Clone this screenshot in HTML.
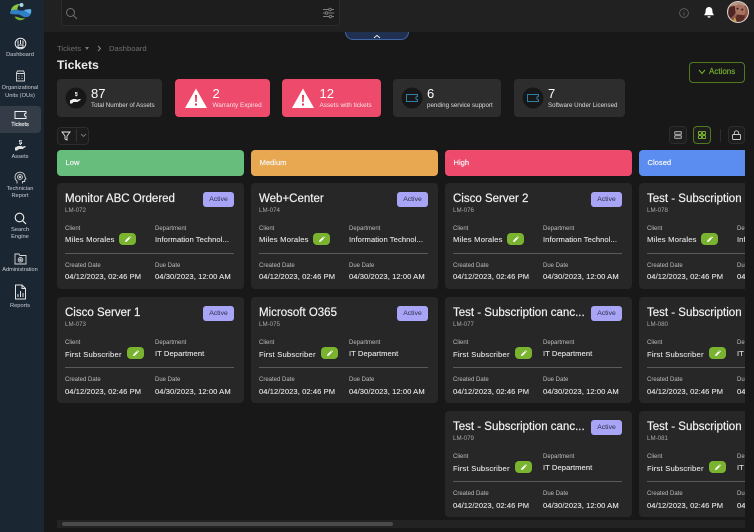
<!DOCTYPE html>
<html><head><meta charset="utf-8"><style>
*{box-sizing:border-box;margin:0;padding:0}
html,body{width:754px;height:532px;overflow:hidden;background:#181818;font-family:"Liberation Sans",sans-serif;color:#fff}
.a{position:absolute}
#side{left:0;top:0;width:44px;height:532px;background:#1b2633}
#top{left:44px;top:0;width:710px;height:32px;background:#212121}
.nl{position:absolute;left:0;width:40px;text-align:center;font-size:5.7px;line-height:7.6px;color:#c9ced4}
.ni{position:absolute}
.stat{position:absolute;top:79px;height:38px;border-radius:4px;background:#2d2d2d}
.stat.r{background:#ee4a6b}
.stat b{position:absolute;left:34px;top:8px;font-weight:400;font-size:13px;line-height:14px}
.stat span{position:absolute;left:34px;top:23px;font-size:6.2px;line-height:7px;white-space:nowrap;color:#ddd}
.stat.r span{color:#fbe3e8;font-size:6.4px}
.stat.r b,.stat.r span{left:37.5px}
.stat svg{position:absolute;left:8px;top:8px}
.hd{position:absolute;top:150px;height:25.5px;border-radius:4px;font-size:7.6px;line-height:25px;padding-left:8.5px;color:#f6f6f6;-webkit-text-stroke:.15px #f6f6f6}
#clip{left:0;top:0;width:745px;height:532px;overflow:hidden}
.c{position:absolute;width:187px;height:106px;background:#272727;border-radius:4px}
.c div{position:absolute;white-space:nowrap}
.t{left:8px;top:9px;font-size:11.5px;line-height:14px;color:#f0f0f0;-webkit-text-stroke:.2px #f0f0f0}
.id{left:8px;top:23.5px;font-size:6.2px;line-height:7px;color:#a8a8a8}
.l{font-size:6px;line-height:7px;color:#bdbdbd;margin-top:1px}
.v{font-size:7.6px;line-height:10px;color:#e6e6e6;letter-spacing:.07px;margin-top:1px;-webkit-text-stroke:.1px #e6e6e6}
.c .v:nth-child(5){letter-spacing:.22px}
.b{left:146px;top:9px;width:31px;height:15px;border-radius:3px;background:#a9a5f6;color:#2b2a4a;font-size:6.8px;line-height:15px;text-align:center}
.p{top:50px;width:17px;height:12px;border-radius:4px;background:#7ab32f}
.p svg{position:absolute;left:4.5px;top:2.5px}
.h{left:8px;top:69.5px;width:169px;height:1px;background:#5a5a5a}
.sq{position:absolute;top:126px;width:18px;height:18px;border-radius:4px;border:1px solid #2d2d2d;background:#1d1d1d}
</style></head><body>
<div class="a" id="top"></div>
<div class="a" style="left:61px;top:0;width:279px;height:25.5px;background:#1d1d1d;border:1px solid #2b2b2b;border-top:0;border-radius:0 0 4px 4px"></div>
<svg class="a" style="left:65px;top:7px" width="13" height="13" viewBox="0 0 13 13" fill="none" stroke="#707070" stroke-width="1"><circle cx="5.5" cy="5.5" r="4"/><path d="M8.5 8.5l3.5 3.5"/></svg>
<svg class="a" style="left:322px;top:7px" width="13" height="12" viewBox="0 0 13 12" fill="none" stroke="#7c7c7c" stroke-width=".9"><path d="M1 2.5h11M1 6h11M1 9.5h11"/><circle cx="8" cy="2.5" r="1.3" fill="#212121"/><circle cx="4.5" cy="6" r="1.3" fill="#212121"/><circle cx="8.5" cy="9.5" r="1.3" fill="#212121"/></svg>
<svg class="a" style="left:678px;top:7px" width="12" height="12" viewBox="0 0 12 12" fill="none" stroke="#6a6a6a" stroke-width=".8"><circle cx="6" cy="6" r="4.4"/><path d="M6 5.4v3M6 3.5v.8"/></svg>
<svg class="a" style="left:703px;top:6px" width="12" height="13" viewBox="0 0 12 13" fill="#fff"><path d="M6 1c-2.4 0-3.4 1.900-3.400 3.900 0 1.900-.5 2.800-1.300 3.600v.8h9.400v-.8c-.8-.8-1.300-1.700-1.300-3.600C9.400 2.900 8.400 1 6 1z"/><path d="M4.500 10.200h3a1.500 1.500 0 0 1-3 0z"/></svg>
<svg class="a" style="left:727px;top:1px" width="22" height="22" viewBox="0 0 23 23"><defs><clipPath id="av"><circle cx="11.5" cy="11.5" r="10.400"/></clipPath></defs><circle cx="11.5" cy="11.5" r="11.500" fill="#d9d4cf"/><g clip-path="url(#av)"><rect width="23" height="23" fill="#8f5648"/><rect y="0" width="23" height="5" fill="#b89584"/><ellipse cx="13" cy="10" rx="6.500" ry="6.500" fill="#a87461"/><path d="M2 7l6-2 1 8-5 5-3-3z" fill="#4d2422"/><path d="M10 14l9 1-2 6-8 1z" fill="#5a2c25"/><path d="M8 17l3 6H6z" fill="#c9a445"/><circle cx="11" cy="8" r="1.100" fill="#3d211c"/><circle cx="16" cy="9" r="1.100" fill="#3d211c"/></g></svg>
<div class="a" style="left:345px;top:32px;width:64px;height:7.5px;background:#1f3050;border:1px solid #3f64a8;border-top:0;border-radius:0 0 12px 12px"></div>
<svg class="a" style="left:373px;top:33.5px" width="8" height="5" viewBox="0 0 8 5" fill="none" stroke="#e8e8e8" stroke-width="1"><path d="M1 4l3-2.600L7 4"/></svg>

<div class="a" id="side">
<svg class="ni" style="left:0;top:0" width="44" height="30" viewBox="0 0 44 30"><path d="M11 11c0-4 4-7 9-7-2 2-3 4-2.500 6z" fill="#8cc63f"/><circle cx="21.500" cy="5" r="2" fill="#a7d5ee"/><path d="M10 13c0-3 4-4 8-3 3 .8 6 1 7.500-.5L31 9c1 3 0 7-3.500 8-4 1-6-2-9-2.500-3-.5-8 .5-8.500-1.500z" fill="#2f7fc4"/><path d="M24 10l6.500-1c.8 1.500.8 3-.5 5-1.500-1-4-2.500-6-4z" fill="#5fb0e6"/><path d="M14.500 16.500c3 0 6 2.500 10.500 1.500-2 3-8 3.500-10.500-1.500z" fill="#7ab32f"/></svg>

<svg class="ni" style="left:14px;top:37px" width="13" height="13" viewBox="0 0 13 13" fill="none" stroke="#e6e6e6" stroke-width="1"><circle cx="6.500" cy="6.500" r="5.300"/><path d="M4 3.500v3.500M6.500 3v4M9 3.500v3.500M4 8h5v2.500H4z"/></svg>
<div class="nl" style="top:52px">Dashboard</div>
<svg class="ni" style="left:15px;top:70px" width="11" height="12" viewBox="0 0 11 12" fill="none" stroke="#d8d8d8" stroke-width=".9"><path d="M1.500 11V3l1-2h6l1 2v8zM1.500 3.500h8M3.500 6h1M6.500 6h1M3.500 8.500h1M6.500 8.500h1"/></svg>
<div class="nl" style="top:85px">Organizational<br>Units (OUs)</div>
<div class="a" style="left:0;top:106px;width:41px;height:27px;border-radius:0 4px 4px 0;background:#343c48"></div>
<svg class="ni" style="left:14px;top:110px" width="13" height="10" viewBox="0 0 13 10" fill="none" stroke="#eee" stroke-width="1"><path d="M1 1.500h11v1.800a1.500 1.500 0 0 0 0 3V8.500H1z"/></svg>
<div class="nl" style="top:121.500px;color:#f0f0f0;-webkit-text-stroke:.15px #f0f0f0">Tickets</div>
<svg class="ni" style="left:14px;top:139px" width="13" height="13" viewBox="0 0 13 13" fill="#e0e0e0"><path d="M5 1h3v.8H5.800v.8H8v2.400H7V6H6v-.9H5v-.8h2.200v-.8H5z"/><path d="M1 8.500l3-1.500h3.500l1 .8L11 7l1 .8-3.500 2.200H5L3 11.500H1z"/></svg>
<div class="nl" style="top:154px">Assets</div>
<svg class="ni" style="left:13px;top:171px" width="14" height="14" viewBox="0 0 14 14" fill="none" stroke="#d8d8d8" stroke-width=".9"><path d="M4 12.500v-2.500C2.500 9 2 7.500 2 6c0-2.800 2.200-4.800 5-4.800s5 2 5 4.800l1 2-1.300.5V10.500H9.500v2"/><circle cx="7" cy="6" r="2.400"/><circle cx="7" cy="6" r=".8"/></svg>
<div class="nl" style="top:185.500px">Technician<br>Report</div>
<svg class="ni" style="left:14px;top:212px" width="13" height="13" viewBox="0 0 13 13" fill="none" stroke="#f0f0f0" stroke-width="1.100"><circle cx="5.500" cy="5.500" r="4.300"/><path d="M8.700 8.700l3.300 3.300"/></svg>
<div class="nl" style="top:226.500px">Search<br>Engine</div>
<svg class="ni" style="left:14px;top:253px" width="13" height="12" viewBox="0 0 13 12" fill="none" stroke="#d8d8d8" stroke-width=".9"><path d="M1 1h4l1 1.500h6V11H1z"/><circle cx="6.500" cy="6.800" r="2.300"/><circle cx="6.500" cy="6.800" r=".8"/></svg>
<div class="nl" style="top:267px;font-size:5.600px">Administration</div>
<svg class="ni" style="left:14px;top:284px" width="13" height="16" viewBox="0 0 13 16" fill="none" stroke="#e4e4e4" stroke-width="1"><path d="M1.500 1h6.500l3.500 3.500V15h-10zM8 1v3.500h3.500"/><path d="M4 13V10M6.500 13V7M9 13V9"/></svg>
<div class="nl" style="top:303px">Reports</div>
</div>

<div class="a" style="left:57px;top:44px;font-size:7.700px;line-height:9px;color:#6e6e6e;white-space:nowrap">Tickets</div>
<div class="a" style="left:85px;top:47px;width:0;height:0;border:2.500px solid transparent;border-top:3.500px solid #7a7a7a"></div>
<svg class="a" style="left:97px;top:45px" width="5" height="7" viewBox="0 0 5 7" fill="none" stroke="#8a8a8a" stroke-width="1"><path d="M1 1l2.500 2.500L1 6"/></svg>
<div class="a" style="left:109px;top:44px;font-size:7.700px;line-height:9px;color:#6e6e6e;white-space:nowrap">Dashboard</div>
<div class="a" style="left:57px;top:58px;font-size:12.200px;line-height:15px;font-weight:700;color:#ececec">Tickets</div>

<div class="stat" style="left:57px;width:105px"><svg width="22" height="22" viewBox="0 0 22 22"><circle cx="11" cy="11" r="10.500" fill="#171717"/><path d="M10 5h2.500v.7H10.700v.7h1.800v2.200h-.8v.8h-.9v-.8H10v-.7h1.800v-.7H10zM5 13.500l3-1.500h3l1 .7 3-.7.9.8-3.500 2.200H8.500L7 16.500H5z" fill="#eee"/></svg><b>87</b><span>Total Number of Assets</span></div>
<div class="stat r" style="left:175px;width:95px"><svg style="left:9.500px;top:9px" width="22" height="21" viewBox="0 0 22 21"><path d="M11 0.500L22 20H0z" fill="#fff"/><path d="M10 7h2l-.3 7h-1.400zM10 15.500h2v2h-2z" fill="#e8354f"/></svg><b>2</b><span>Warranty Expired</span></div>
<div class="stat r" style="left:282px;width:99px"><svg style="left:9.500px;top:9px" width="22" height="21" viewBox="0 0 22 21"><path d="M11 0.500L22 20H0z" fill="#fff"/><path d="M10 7h2l-.3 7h-1.400zM10 15.500h2v2h-2z" fill="#e8354f"/></svg><b>12</b><span>Assets with tickets</span></div>
<div class="stat" style="left:393px;width:108px"><svg width="22" height="22" viewBox="0 0 22 22"><circle cx="11" cy="11" r="10.500" fill="#171717"/><path d="M5.500 7.500h11v1.800a1.700 1.700 0 0 0 0 3.400v1.800h-11z" fill="none" stroke="#2f7ea6" stroke-width="1"/></svg><b>6</b><span>pending service support</span></div>
<div class="stat" style="left:514px;width:111px"><svg width="22" height="22" viewBox="0 0 22 22"><circle cx="11" cy="11" r="10.500" fill="#171717"/><path d="M5.500 7.500h11v1.800a1.700 1.700 0 0 0 0 3.400v1.800h-11z" fill="none" stroke="#2f7ea6" stroke-width="1"/></svg><b>7</b><span>Software Under Licensed</span></div>

<div class="a" style="left:689px;top:62px;width:56px;height:20.500px;border:1px solid #527a1c;border-radius:4px"></div>
<svg class="a" style="left:698px;top:69px" width="8" height="6" viewBox="0 0 8 6" fill="none" stroke="#7ab32f" stroke-width="1"><path d="M1 1l3 3.500L7 1"/></svg>
<div class="a" style="left:709px;top:67px;font-size:8px;line-height:10px;color:#7ab32f;-webkit-text-stroke:.15px #7ab32f">Actions</div>

<div class="a" style="left:57px;top:127px;width:32px;height:17.500px;border:1px solid #2d2d2d;border-radius:4px;background:#1c1c1c"></div>
<div class="a" style="left:76px;top:129px;width:1px;height:13px;background:#333"></div>
<svg class="a" style="left:61px;top:130.500px" width="10" height="10" viewBox="0 0 10 10" fill="none" stroke="#e8e8e8" stroke-width=".9"><path d="M1 1h8L6 5v4L4 8V5z"/></svg>
<svg class="a" style="left:79.500px;top:133px" width="7" height="5" viewBox="0 0 7 5" fill="none" stroke="#7a7a7a" stroke-width=".9"><path d="M1 1l2.500 2.500L6 1"/></svg>

<div class="sq" style="left:669px"></div>
<svg class="a" style="left:674px;top:131px" width="8" height="8" viewBox="0 0 8 8" fill="none" stroke="#9a9a9a" stroke-width="1.200"><rect x=".6" y=".6" width="6.800" height="2.800" rx="1"/><rect x=".6" y="4.600" width="6.800" height="2.800" rx="1"/></svg>
<div class="sq" style="left:693px;border-color:#527a1c"></div>
<svg class="a" style="left:698px;top:131px" width="8" height="8" viewBox="0 0 8 8" fill="none" stroke="#7ab32f" stroke-width="1"><rect x=".5" y=".5" width="3" height="3" rx=".8"/><rect x="4.500" y=".5" width="3" height="3" rx=".8"/><rect x=".5" y="4.500" width="3" height="3" rx=".8"/><rect x="4.500" y="4.500" width="3" height="3" rx=".8"/></svg>
<div class="a" style="left:720px;top:129px;width:1px;height:13px;background:#2c2c2c"></div>
<div class="sq" style="left:728px;width:17px"></div>
<svg class="a" style="left:732px;top:130px" width="9" height="10" viewBox="0 0 9 10" fill="none" stroke="#d0d0d0" stroke-width=".9"><rect x=".5" y="4.500" width="8" height="5" rx="1"/><path d="M2.300 4.500V3a2.200 2.200 0 0 1 4.400 0v1.500"/></svg>

<div class="a" id="clip">
<div class="hd" style="left:57px;width:186.500px;background:#66bd7c">Low</div>
<div class="hd" style="left:251px;width:187px;background:#e8a851">Medium</div>
<div class="hd" style="left:445px;width:187px;background:#ee4a6b">High</div>
<div class="hd" style="left:639px;width:187px;background:#5b8df0">Closed</div>

<!-- col 1 -->
<div class="c" style="left:57px;top:183px"><div class="t">Monitor ABC Ordered</div><div class="id">LM-072</div><div class="b">Active</div><div class="l" style="left:8px;top:41.500px">Client</div><div class="v" style="left:8px;top:51px">Miles Morales</div><div class="p" style="left:62px"><svg width="8" height="7" viewBox="0 0 8 7"><path d="M1 6l.4-1.600 3.300-3.300 1.300 1.300-3.300 3.300zM5.200.7l.6-.5 1.300 1.300-.6.500z" fill="#fff"/></svg></div><div class="l" style="left:98px;top:41.500px">Department</div><div class="v" style="left:98px;top:51px">Information Technol...</div><div class="h"></div><div class="l" style="left:8px;top:78.500px">Created Date</div><div class="v" style="left:8px;top:88px">04/12/2023, 02:46 PM</div><div class="l" style="left:98px;top:78.500px">Due Date</div><div class="v" style="left:98px;top:88px">04/30/2023, 12:00 AM</div></div>

<div class="c" style="left:57px;top:297px"><div class="t">Cisco Server 1</div><div class="id">LM-073</div><div class="b">Active</div><div class="l" style="left:8px;top:41.500px">Client</div><div class="v" style="left:8px;top:52px">First Subscriber</div><div class="p" style="left:70px"><svg width="8" height="7" viewBox="0 0 8 7"><path d="M1 6l.4-1.600 3.300-3.300 1.300 1.300-3.300 3.300zM5.200.7l.6-.5 1.300 1.300-.6.500z" fill="#fff"/></svg></div><div class="l" style="left:98px;top:41.500px">Department</div><div class="v" style="left:98px;top:51px">IT Department</div><div class="h"></div><div class="l" style="left:8px;top:78.500px">Created Date</div><div class="v" style="left:8px;top:89px">04/12/2023, 02:46 PM</div><div class="l" style="left:98px;top:78.500px">Due Date</div><div class="v" style="left:98px;top:89px">04/30/2023, 12:00 AM</div></div>

<!-- col 2 -->
<div class="c" style="left:251px;top:183px"><div class="t">Web+Center</div><div class="id">LM-074</div><div class="b">Active</div><div class="l" style="left:8px;top:41.500px">Client</div><div class="v" style="left:8px;top:51px">Miles Morales</div><div class="p" style="left:62px"><svg width="8" height="7" viewBox="0 0 8 7"><path d="M1 6l.4-1.600 3.300-3.300 1.300 1.300-3.300 3.300zM5.200.7l.6-.5 1.300 1.300-.6.500z" fill="#fff"/></svg></div><div class="l" style="left:98px;top:41.500px">Department</div><div class="v" style="left:98px;top:51px">Information Technol...</div><div class="h"></div><div class="l" style="left:8px;top:78.500px">Created Date</div><div class="v" style="left:8px;top:88px">04/12/2023, 02:46 PM</div><div class="l" style="left:98px;top:78.500px">Due Date</div><div class="v" style="left:98px;top:88px">04/30/2023, 12:00 AM</div></div>

<div class="c" style="left:251px;top:297px"><div class="t">Microsoft O365</div><div class="id">LM-075</div><div class="b">Active</div><div class="l" style="left:8px;top:41.500px">Client</div><div class="v" style="left:8px;top:52px">First Subscriber</div><div class="p" style="left:70px"><svg width="8" height="7" viewBox="0 0 8 7"><path d="M1 6l.4-1.600 3.300-3.300 1.300 1.300-3.300 3.300zM5.200.7l.6-.5 1.300 1.300-.6.500z" fill="#fff"/></svg></div><div class="l" style="left:98px;top:41.500px">Department</div><div class="v" style="left:98px;top:51px">IT Department</div><div class="h"></div><div class="l" style="left:8px;top:78.500px">Created Date</div><div class="v" style="left:8px;top:89px">04/12/2023, 02:46 PM</div><div class="l" style="left:98px;top:78.500px">Due Date</div><div class="v" style="left:98px;top:89px">04/30/2023, 12:00 AM</div></div>

<!-- col 3 -->
<div class="c" style="left:445px;top:183px"><div class="t">Cisco Server 2</div><div class="id">LM-076</div><div class="b">Active</div><div class="l" style="left:8px;top:41.500px">Client</div><div class="v" style="left:8px;top:51px">Miles Morales</div><div class="p" style="left:62px"><svg width="8" height="7" viewBox="0 0 8 7"><path d="M1 6l.4-1.600 3.300-3.300 1.300 1.300-3.300 3.300zM5.200.7l.6-.5 1.300 1.300-.6.500z" fill="#fff"/></svg></div><div class="l" style="left:98px;top:41.500px">Department</div><div class="v" style="left:98px;top:51px">Information Technol...</div><div class="h"></div><div class="l" style="left:8px;top:78.500px">Created Date</div><div class="v" style="left:8px;top:88px">04/12/2023, 02:46 PM</div><div class="l" style="left:98px;top:78.500px">Due Date</div><div class="v" style="left:98px;top:88px">04/30/2023, 12:00 AM</div></div>

<div class="c" style="left:445px;top:297px"><div class="t">Test - Subscription canc...</div><div class="id">LM-077</div><div class="b">Active</div><div class="l" style="left:8px;top:41.500px">Client</div><div class="v" style="left:8px;top:52px">First Subscriber</div><div class="p" style="left:70px"><svg width="8" height="7" viewBox="0 0 8 7"><path d="M1 6l.4-1.600 3.300-3.300 1.300 1.300-3.300 3.300zM5.200.7l.6-.5 1.300 1.300-.6.500z" fill="#fff"/></svg></div><div class="l" style="left:98px;top:41.500px">Department</div><div class="v" style="left:98px;top:51px">IT Department</div><div class="h"></div><div class="l" style="left:8px;top:78.500px">Created Date</div><div class="v" style="left:8px;top:89px">04/12/2023, 02:46 PM</div><div class="l" style="left:98px;top:78.500px">Due Date</div><div class="v" style="left:98px;top:89px">04/30/2023, 12:00 AM</div></div>

<div class="c" style="left:445px;top:411px"><div class="t">Test - Subscription canc...</div><div class="id">LM-079</div><div class="b">Active</div><div class="l" style="left:8px;top:41.500px">Client</div><div class="v" style="left:8px;top:52px">First Subscriber</div><div class="p" style="left:70px"><svg width="8" height="7" viewBox="0 0 8 7"><path d="M1 6l.4-1.600 3.300-3.300 1.300 1.300-3.300 3.300zM5.200.7l.6-.5 1.300 1.300-.6.500z" fill="#fff"/></svg></div><div class="l" style="left:98px;top:41.500px">Department</div><div class="v" style="left:98px;top:51px">IT Department</div><div class="h"></div><div class="l" style="left:8px;top:78.500px">Created Date</div><div class="v" style="left:8px;top:89px">04/12/2023, 02:46 PM</div><div class="l" style="left:98px;top:78.500px">Due Date</div><div class="v" style="left:98px;top:89px">04/30/2023, 12:00 AM</div></div>

<!-- col 4 -->
<div class="c" style="left:639px;top:183px"><div class="t">Test - Subscription canc...</div><div class="id">LM-078</div><div class="b">Active</div><div class="l" style="left:8px;top:41.500px">Client</div><div class="v" style="left:8px;top:51px">Miles Morales</div><div class="p" style="left:62px"><svg width="8" height="7" viewBox="0 0 8 7"><path d="M1 6l.4-1.600 3.300-3.300 1.300 1.300-3.300 3.300zM5.200.7l.6-.5 1.300 1.300-.6.500z" fill="#fff"/></svg></div><div class="l" style="left:98px;top:41.500px">Department</div><div class="v" style="left:98px;top:51px">Information Technol...</div><div class="h"></div><div class="l" style="left:8px;top:78.500px">Created Date</div><div class="v" style="left:8px;top:88px">04/12/2023, 02:46 PM</div><div class="l" style="left:98px;top:78.500px">Due Date</div><div class="v" style="left:98px;top:88px">04/30/2023, 12:00 AM</div></div>

<div class="c" style="left:639px;top:297px"><div class="t">Test - Subscription canc...</div><div class="id">LM-080</div><div class="b">Active</div><div class="l" style="left:8px;top:41.500px">Client</div><div class="v" style="left:8px;top:52px">First Subscriber</div><div class="p" style="left:70px"><svg width="8" height="7" viewBox="0 0 8 7"><path d="M1 6l.4-1.600 3.300-3.300 1.300 1.300-3.300 3.300zM5.200.7l.6-.5 1.300 1.300-.6.500z" fill="#fff"/></svg></div><div class="l" style="left:98px;top:41.500px">Department</div><div class="v" style="left:98px;top:51px">IT Department</div><div class="h"></div><div class="l" style="left:8px;top:78.500px">Created Date</div><div class="v" style="left:8px;top:89px">04/12/2023, 02:46 PM</div><div class="l" style="left:98px;top:78.500px">Due Date</div><div class="v" style="left:98px;top:89px">04/30/2023, 12:00 AM</div></div>

<div class="c" style="left:639px;top:411px"><div class="t">Test - Subscription canc...</div><div class="id">LM-081</div><div class="b">Active</div><div class="l" style="left:8px;top:41.500px">Client</div><div class="v" style="left:8px;top:52px">First Subscriber</div><div class="p" style="left:70px"><svg width="8" height="7" viewBox="0 0 8 7"><path d="M1 6l.4-1.600 3.300-3.300 1.300 1.300-3.300 3.300zM5.200.7l.6-.5 1.300 1.300-.6.500z" fill="#fff"/></svg></div><div class="l" style="left:98px;top:41.500px">Department</div><div class="v" style="left:98px;top:51px">IT Department</div><div class="h"></div><div class="l" style="left:8px;top:78.500px">Created Date</div><div class="v" style="left:8px;top:89px">04/12/2023, 02:46 PM</div><div class="l" style="left:98px;top:78.500px">Due Date</div><div class="v" style="left:98px;top:89px">04/30/2023, 12:00 AM</div></div>
</div>

<div class="a" style="left:57px;top:520px;width:688px;height:8px;background:#232323"></div>
<div class="a" style="left:62px;top:522px;width:331px;height:4px;border-radius:2px;background:#4a4a4a"></div>
</body></html>
